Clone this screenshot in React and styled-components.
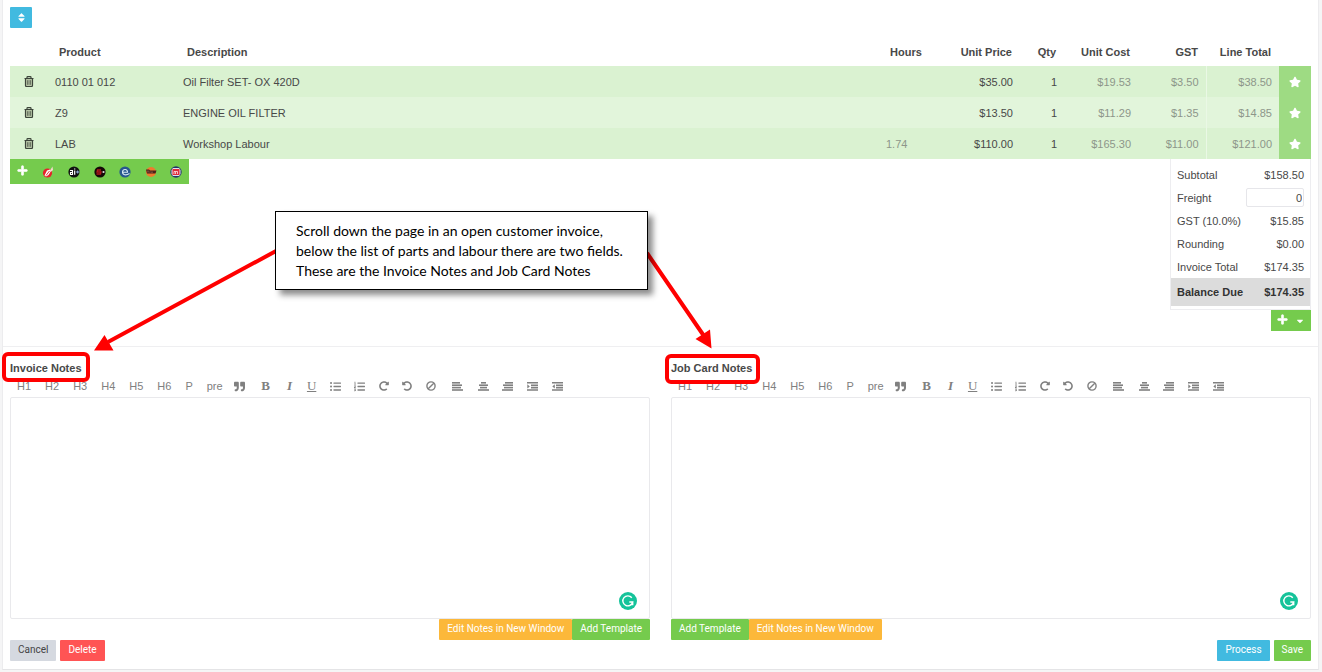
import React from "react";
import styled, { createGlobalStyle } from "styled-components";
import {
  FaCaretDown,
  FaListOl,
  FaListUl,
  FaPlus,
  FaQuoteRight,
  FaRedoAlt,
  FaSort,
  FaStar,
  FaUndoAlt
} from "react-icons/fa";

const lines = [
  { product: "0110 01 012", description: "Oil Filter SET- OX 420D", hours: "", price: "$35.00", qty: 1, cost: "$19.53", gst: "$3.50", total: "$38.50" },
  { product: "Z9", description: "ENGINE OIL FILTER", hours: "", price: "$13.50", qty: 1, cost: "$11.29", gst: "$1.35", total: "$14.85" },
  { product: "LAB", description: "Workshop Labour", hours: "1.74", price: "$110.00", qty: 1, cost: "$165.30", gst: "$11.00", total: "$121.00" }
];

// four stacked bars, each given as [x, width]
const bars = rows => () => (
  <svg width="11" height="9" viewBox="0 0 11 9" fill="currentColor">
    {rows.map(([x, w], i) => (
      <rect key={i} x={x} y={i * 2.4} width={w} height="1.6" />
    ))}
  </svg>
);

const AlignLeftIcon = bars([[0, 8], [0, 10], [0, 9], [0, 11]]);
const AlignCenterIcon = bars([[3, 5], [1, 9], [2, 7], [0, 11]]);
const AlignRightIcon = bars([[3, 8], [1, 10], [2, 9], [0, 11]]);

const indentIcon = arrow => () => (
  <svg width="11" height="9" viewBox="0 0 11 9" fill="currentColor">
    <path d="M0 0h11v1.600H0zM4 2.400h7V4H4zM4 4.800h7v1.600H4zM0 7.200h11v1.600H0z" />
    <path d={arrow} />
  </svg>
);

const IndentIcon = indentIcon("M.300 2.300L2.800 4.400.300 6.500z");
const OutdentIcon = indentIcon("M2.800 2.300L.300 4.400l2.500 2.100z");

const ClearIcon = () => (
  <svg width="10" height="10" viewBox="0 0 10 10" fill="none" stroke="currentColor" strokeWidth="1.400">
    <circle cx="5" cy="5" r="4.100" />
    <path d="M2.200 7.800L7.800 2.200" />
  </svg>
);

const textTools = ["H1", "H2", "H3", "H4", "H5", "H6", "P", "pre"];

const iconTools = [
  { name: "Quote", icon: <FaQuoteRight />, width: 20 },
  { name: "Bold", glyph: "B", width: 32 },
  { name: "Italic", glyph: "I", width: 16 },
  { name: "Underline", glyph: "U", width: 28 },
  { name: "Bullet list", icon: <FaListUl />, width: 20 },
  { name: "Numbered list", icon: <FaListOl />, width: 28 },
  { name: "Redo", icon: <FaRedoAlt size={10} />, width: 20 },
  { name: "Undo", icon: <FaUndoAlt size={10} />, width: 26 },
  { name: "Clear", icon: <ClearIcon />, width: 22 },
  { name: "Align left", icon: <AlignLeftIcon />, width: 32 },
  { name: "Align center", icon: <AlignCenterIcon />, width: 20 },
  { name: "Align right", icon: <AlignRightIcon />, width: 28 },
  { name: "Indent", icon: <IndentIcon />, width: 22 },
  { name: "Outdent", icon: <OutdentIcon />, width: 28 }
];

const TrashIcon = () => (
  <svg width="10" height="11" viewBox="0 0 10 11" fill="none" stroke="#3c443a" strokeWidth="1.200">
    <path d="M1.500 3h7v7h-7z" fill="#b5c4a5" stroke="none" />
    <path d="M.500 2.500h9M3 2.300V1.200Q3 .600 3.700.600h2.600Q7 .600 7 1.200v1.100M1.500 2.500v7q0 1 1 1h5q1 0 1-1v-7" />
    <path d="M3.500 4.200v4.600M5 4.200v4.600M6.500 4.200v4.600" strokeWidth=".6" />
  </svg>
);

const supplierIcons = [
  {
    name: "Supplier one",
    art: (
      <>
        <circle cx="5.500" cy="7" r="4.600" fill="#e5232b" />
        <path d="M2.500 9.500L5 4.500 8 3.500 9 5 6.500 9 4 10.500z" fill="#fff" />
        <path d="M4 9.500L7.500 5" stroke="#e5232b" strokeWidth=".9" />
        <path d="M8 4.500L10.500.500 11 4 9.500 5.500z" fill="#f6d9cf" />
      </>
    )
  },
  {
    name: "Supplier two",
    art: (
      <>
        <circle cx="6" cy="6" r="5.600" fill="#111" />
        <path d="M2 4.500h2.500v4H2.500V6.500h2" fill="none" stroke="#fff" strokeWidth="1.100" />
        <path d="M6.700 4.500v4.200M6.700 2.500v1" stroke="#fff" strokeWidth="1.200" />
        <path d="M8 6h3.500M9.700 4.500v3" stroke="#8fb4e0" strokeWidth="1" />
      </>
    )
  },
  {
    name: "Supplier three",
    art: (
      <>
        <circle cx="6" cy="6" r="5.600" fill="#150808" />
        <path d="M7 4H3.500L3 6h4L6.500 8H2.500" stroke="#b3161c" strokeWidth="1.300" fill="none" />
        <circle cx="9.500" cy="6" r="1.100" fill="#ddd" />
      </>
    )
  },
  {
    name: "Supplier four",
    art: (
      <>
        <circle cx="6" cy="6" r="5.600" fill="#27568f" />
        <path d="M3.500 6.200H8.500C8.800 3 4 2.500 3.500 5.800 3.300 9 7 9.800 10.500 7.500" stroke="#d6e8f5" strokeWidth="1.100" fill="none" />
      </>
    )
  },
  {
    name: "Supplier five",
    art: (
      <>
        <circle cx="6" cy="6" r="5" fill="#ee7a30" />
        <path d="M1 3.500h3l1 1h6.500l-1 3H2z" fill="#4a2019" />
        <path d="M3 4.500v2M5 5.500v1M7 5.500v1.500" stroke="#c98a68" strokeWidth=".7" />
      </>
    )
  },
  {
    name: "Supplier six",
    art: (
      <>
        <circle cx="6" cy="6" r="5.700" fill="#24346b" />
        <path d="M3 2h6l1.500 2v4L9 10H3L1.500 8V4z" fill="#dfe3ee" />
        <path d="M2.500 3h7v6h-7z" fill="#e02b3c" />
        <path d="M4 8V5.500h1.500V8M5.500 5.500H7.500V8" stroke="#fff" strokeWidth=".7" fill="none" />
      </>
    )
  }
];

const AssistantBadge = () => (
  <Badge viewBox="0 0 18 18" aria-hidden="true">
    <circle cx="9" cy="9" r="9" fill="#15c39a" />
    <path d="M12.800 5.800A5 5 0 1 0 13.700 10H10.300M13.700 10v3.300" fill="none" stroke="#fff" strokeWidth="1.400" />
  </Badge>
);

const NotesEditor = ({ id, title, reverse, drop }) => (
  <Editor>
    <NotesLabel htmlFor={id}>
      {title}
      <Highlight $drop={drop} />
    </NotesLabel>
    <Toolbar>
      {textTools.map(t => (
        <Tool key={t} type="button">
          {t}
        </Tool>
      ))}
      {iconTools.map(({ name, icon, glyph, width }) => (
        <IconTool key={name} type="button" aria-label={name} $width={width}>
          {glyph ? <Glyph $kind={name}>{glyph}</Glyph> : icon}
        </IconTool>
      ))}
    </Toolbar>
    <NotesBox>
      <NotesArea id={id} />
      <AssistantBadge />
    </NotesBox>
    <NotesActions $reverse={reverse}>
      <Button type="button" $color="#fcb83a">
        Edit Notes in New Window
      </Button>
      <Button type="button" $color="#75cb4d">
        Add Template
      </Button>
    </NotesActions>
  </Editor>
);

const App = () => (
  <>
    <GlobalStyle />
    <Card>
      <SortButton type="button" aria-label="Sort">
        <FaSort />
      </SortButton>

      <LinesTable>
        <colgroup>
          <Col $w={38} />
          <Col $w={128} />
          <Col />
          <Col $w={67} />
          <Col $w={74} />
          <Col $w={44} />
          <Col $w={74} />
          <Col $w={68} />
          <Col $w={73} />
          <Col $w={32} />
        </colgroup>
        <thead>
          <tr>
            <Th />
            <Th>Product</Th>
            <Th>Description</Th>
            <Th>Hours</Th>
            <Th $right>Unit Price</Th>
            <Th $right>Qty</Th>
            <Th $right>Unit Cost</Th>
            <Th $right>GST</Th>
            <Th $right>Line Total</Th>
            <Th />
          </tr>
        </thead>
        <tbody>
          {lines.map(l => (
            <Row key={l.product}>
              <IconCell>
                <IconButton type="button" aria-label="Delete line">
                  <TrashIcon />
                </IconButton>
              </IconCell>
              <Td>{l.product}</Td>
              <Td>{l.description}</Td>
              <Td $muted>{l.hours}</Td>
              <Td $right>{l.price}</Td>
              <Td $right>{l.qty}</Td>
              <Td $right $muted>{l.cost}</Td>
              <Td $right $muted $divider>{l.gst}</Td>
              <Td $right $muted>{l.total}</Td>
              <StarCell>
                <IconButton type="button" aria-label="Favourite">
                  <FaStar size={12} />
                </IconButton>
              </StarCell>
            </Row>
          ))}
        </tbody>
      </LinesTable>

      <Below>
        <SupplierBar>
          <SupplierButton type="button" aria-label="Add line">
            <PlusIcon />
          </SupplierButton>
          {supplierIcons.map(s => (
            <SupplierButton key={s.name} type="button" aria-label={s.name}>
              <svg width="12" height="12" viewBox="0 0 12 12">
                {s.art}
              </svg>
            </SupplierButton>
          ))}
        </SupplierBar>
        <Summary>
          <Totals>
            <TotalRow>
              <span>Subtotal</span>
              <span>$158.50</span>
            </TotalRow>
            <TotalRow>
              <label htmlFor="freight">Freight</label>
              <FreightInput id="freight" defaultValue="0" />
            </TotalRow>
            <TotalRow>
              <span>GST (10.0%)</span>
              <span>$15.85</span>
            </TotalRow>
            <TotalRow>
              <span>Rounding</span>
              <span>$0.00</span>
            </TotalRow>
            <TotalRow>
              <span>Invoice Total</span>
              <span>$174.35</span>
            </TotalRow>
            <BalanceRow>
              <span>Balance Due</span>
              <span>$174.35</span>
            </BalanceRow>
          </Totals>
          <AddPayment type="button" aria-label="Add payment">
            <PlusIcon />
            <FaCaretDown size={10} />
          </AddPayment>
        </Summary>
      </Below>

      <Notes>
        <NotesEditor id="invoice-notes" title="Invoice Notes" />
        <NotesEditor id="job-card-notes" title="Job Card Notes" reverse drop />
      </Notes>

      <Footer>
        <ButtonGroup>
          <Button type="button" $color="#d5d9e0" $text="#444">
            Cancel
          </Button>
          <Button type="button" $color="#ff5454">
            Delete
          </Button>
        </ButtonGroup>
        <ButtonGroup>
          <Button type="button" $color="#41bae0">
            Process
          </Button>
          <Button type="button" $color="#75cb4d">
            Save
          </Button>
        </ButtonGroup>
      </Footer>
    </Card>

    <Arrows width="720" height="360" viewBox="0 0 720 360" aria-hidden="true">
      <path d="M276 251L108 342M647 253L704 336" stroke="#f00" strokeWidth="4" />
      <path d="M94 350.500L104.500 335 113.500 350.500zM711.500 348.500L695.500 339 710 329.500z" fill="#f00" />
    </Arrows>
    <Callout>
      Scroll down the page in an open customer invoice,
      <br />
      below the list of parts and labour there are two fields.
      <br />
      These are the Invoice Notes and Job Card Notes
    </Callout>
  </>
);

export default App;

const GlobalStyle = createGlobalStyle`
  * {
    box-sizing: border-box;
  }
  body {
    margin: 0;
    background: #f5f5f6;
    color: #484848;
    font: 11px/16px "Liberation Sans", Arial, sans-serif;
  }
  button, input, textarea {
    font: inherit;
    color: inherit;
  }
  button {
    border: 0;
    padding: 0;
    background: none;
    cursor: pointer;
  }
  svg {
    display: block;
  }
`;

const Card = styled.main`
  margin: 0 3px 0 2px;
  padding: 7px 7px 8px;
  background: #fff;
  border-bottom: 1px solid #e4e4e6;
  border-right: 1px solid #ececee;
  border-left: 1px solid #ececee;
`;

const SortButton = styled.button`
  display: flex;
  align-items: center;
  justify-content: center;
  width: 22px;
  height: 21px;
  border-radius: 1px;
  background: #41bae0;
  color: #fff;
`;

const PlusIcon = styled(FaPlus).attrs({ size: 11 })`
  margin-bottom: 3px;
  stroke: #fff;
  stroke-width: 30px;
`;

const LinesTable = styled.table`
  width: 100%;
  margin-top: 10px;
  table-layout: fixed;
  border-collapse: collapse;
`;

const Col = styled.col`
  width: ${p => (p.$w ? `${p.$w}px` : "auto")};
`;

const Th = styled.th`
  height: 28px;
  padding: 0 8px 0 11px;
  font-weight: bold;
  text-align: ${p => (p.$right ? "right" : "left")};
  white-space: nowrap;
`;

const Row = styled.tr`
  height: 31px;
  background: #daf2d1;
  &:nth-child(even) {
    background: #e2f5db;
  }
`;

const Td = styled.td`
  padding: 0 7px;
  text-align: ${p => (p.$right ? "right" : "left")};
  color: ${p => (p.$muted ? "#8d968a" : "inherit")};
  border-right: ${p => (p.$divider ? "1px solid #eaf8e5" : "0")};
`;

const IconCell = styled.td`
  padding: 0;
`;

const StarCell = styled.td`
  padding: 0;
  background: #9edb83;
  color: #fff;
`;

const IconButton = styled.button`
  display: block;
  margin: 0 auto;
`;

const Below = styled.div`
  display: flex;
  justify-content: space-between;
  align-items: flex-start;
`;

const SupplierBar = styled.div`
  display: flex;
  width: 179px;
  height: 25px;
  background: #75cb4d;
`;

const SupplierButton = styled.button`
  display: flex;
  flex: 1;
  align-items: center;
  justify-content: center;
  color: #fff;
`;

const Summary = styled.div`
  display: flex;
  flex-direction: column;
  align-items: flex-end;
`;

const Totals = styled.div`
  width: 141px;
  padding: 4px 0 3px;
  border: 1px solid #ededf0;
  border-top: 0;
`;

const TotalRow = styled.div`
  display: flex;
  align-items: center;
  justify-content: space-between;
  height: 23px;
  padding: 0 6px;
`;

const BalanceRow = styled(TotalRow)`
  height: 28px;
  background: #dcdcdc;
  color: #333;
  font-weight: bold;
`;

const FreightInput = styled.input`
  width: 58px;
  height: 19px;
  padding: 0 1px;
  border: 1px solid #e6e6ea;
  border-radius: 2px;
  text-align: right;
`;

const AddPayment = styled.button`
  display: flex;
  align-items: center;
  justify-content: space-between;
  width: 40px;
  height: 21px;
  padding: 0 6px;
  background: #75cb4d;
  color: #fff;
`;

const Notes = styled.section`
  display: flex;
  gap: 21px;
  margin: 15px -7px 0;
  padding: 13px 7px 0;
  border-top: 1px solid #efeff1;
`;

const Editor = styled.div`
  flex: 1;
  min-width: 0;
`;

const NotesLabel = styled.label`
  position: relative;
  display: inline-block;
  font-weight: bold;
`;

const Highlight = styled.span`
  position: absolute;
  inset: ${p => (p.$drop ? "-6px -8px -8px -6px" : "-8px -8px -6px")};
  border: 4px solid #f00;
  border-radius: 6px;
`;

const Toolbar = styled.div`
  display: flex;
  align-items: center;
  height: 21px;
  padding-bottom: 1px;
  color: #808080;
`;

const Tool = styled.button`
  display: flex;
  align-items: center;
  justify-content: center;
  flex-shrink: 0;
  padding: 0 7px;
`;

const IconTool = styled(Tool)`
  width: ${p => p.$width}px;
  padding: 0;
`;

const Glyph = styled.span`
  font-family: "Liberation Serif", serif;
  font-size: 13px;
  font-weight: ${p => (p.$kind === "Underline" ? "normal" : "bold")};
  font-style: ${p => (p.$kind === "Italic" ? "italic" : "normal")};
  text-decoration: ${p => (p.$kind === "Underline" ? "underline" : "none")};
`;

const NotesBox = styled.div`
  position: relative;
`;

const NotesArea = styled.textarea`
  display: block;
  width: 100%;
  height: 222px;
  padding: 6px;
  border: 1px solid #e9e9ec;
  border-radius: 2px;
  resize: none;
`;

const Badge = styled.svg`
  position: absolute;
  right: 13px;
  bottom: 9px;
  width: 18px;
  height: 18px;
`;

const NotesActions = styled.div`
  display: flex;
  justify-content: flex-end;
  flex-direction: ${p => (p.$reverse ? "row-reverse" : "row")};
`;

const Button = styled.button`
  height: 21px;
  padding: 0 8px 2px;
  border-radius: 1px;
  background: ${p => p.$color};
  color: ${p => p.$text || "#fff"};
  font-family: Roboto, sans-serif;
  font-size: 10px;
`;

const Footer = styled.footer`
  display: flex;
  justify-content: space-between;
`;

const ButtonGroup = styled.div`
  display: flex;
  gap: 4px;
`;

const Arrows = styled.svg`
  position: absolute;
  top: 0;
  left: 0;
  pointer-events: none;
`;

const Callout = styled.aside`
  position: absolute;
  top: 211px;
  left: 275px;
  padding: 9px 24px 8px 20px;
  border: 1px solid #000;
  background: #fff;
  color: #000;
  font: 14px/20px Lato, sans-serif;
  white-space: nowrap;
  box-shadow: 5px 5px 6px rgba(0, 0, 0, 0.45);
`;
